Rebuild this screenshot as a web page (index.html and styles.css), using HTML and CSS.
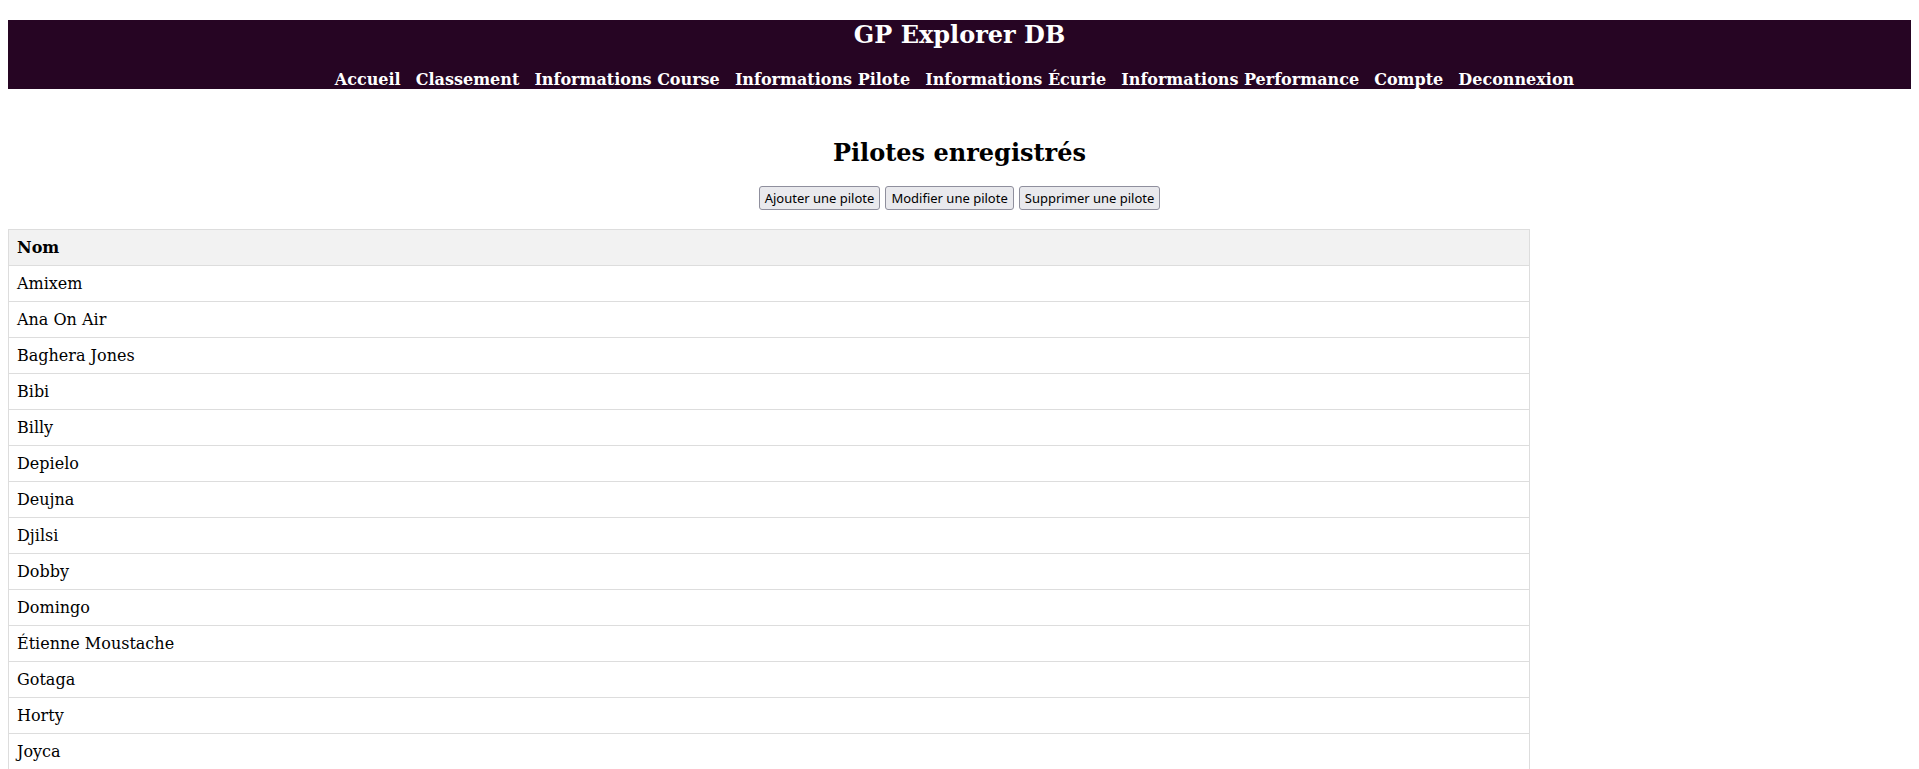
FILE: index.html
```html
<!DOCTYPE html>
<html lang="fr">
<head>
    <meta charset="UTF-8">
    <meta name="viewport" content="width=device-width, initial-scale=1.0">
    <title>Pilotes - GP Explorer DB</title>
    <link rel="stylesheet" href="styles.css">
</head>
<body>

    <!-- En-tête avec le menu -->
    <header class="site-header">
        <h1 class="site-title">GP Explorer DB</h1>
        <nav class="main-nav">
            <a href="#">Accueil</a>
            <a href="#">Classement</a>
            <a href="#">Informations Course</a>
            <a href="#">Informations Pilote</a>
            <a href="#">Informations Écurie</a>
            <a href="#">Informations Performance</a>
            <a href="#">Compte</a>
            <a href="#">Deconnexion</a>
        </nav>
    </header>

    <h2 class="page-title">Pilotes enregistrés</h2>

    <div class="actions">
        <button type="button">Ajouter une pilote</button>
        <button type="button">Modifier une pilote</button>
        <button type="button">Supprimer une pilote</button>
    </div>

    <!-- Liste des pilotes -->
    <table class="pilot-table">
        <thead>
            <tr>
                <th>Nom</th>
            </tr>
        </thead>
        <tbody>
            <tr><td>Amixem</td></tr>
            <tr><td>Ana On Air</td></tr>
            <tr><td>Baghera Jones</td></tr>
            <tr><td>Bibi</td></tr>
            <tr><td>Billy</td></tr>
            <tr><td>Depielo</td></tr>
            <tr><td>Deujna</td></tr>
            <tr><td>Djilsi</td></tr>
            <tr><td>Dobby</td></tr>
            <tr><td>Domingo</td></tr>
            <tr><td>Étienne Moustache</td></tr>
            <tr><td>Gotaga</td></tr>
            <tr><td>Horty</td></tr>
            <tr><td>Joyca</td></tr>
            <tr><td>Kameto</td></tr>
            <tr><td>Maghla</td></tr>
            <tr><td>Michou</td></tr>
            <tr><td>Squeezie</td></tr>
        </tbody>
    </table>

</body>
</html>
```

FILE: styles.css
```css
body {
    font-family: "DejaVu Serif", serif;
    margin: 8px;
}
.site-header {
    margin-top: 12px;
    background-color: #260523;
    color: white;
    text-align: center;
}
.site-title {
    font-size: 24px;
    margin: 0 0 21px;
}
.main-nav a {
    color: white;
    font-weight: bold;
    text-decoration: none;
    margin-right: 10px;
}
.page-title {
    text-align: center;
    font-size: 24px;
    margin: 49px 0 19px;
}
.actions {
    text-align: center;
    margin-bottom: 19px;
}
.actions button {
    font-family: "Noto Sans", sans-serif;
    font-size: 13px;
    padding: 2px 5px;
    border: 1px solid #8f8f9d;
    border-radius: 3px;
    background-color: #e9e9ed;
}
.pilot-table {
    width: 80%;
    border-collapse: collapse;
}
.pilot-table th, .pilot-table td {
    border: 1px solid #ddd;
    padding: 8px;
    text-align: left;
}
.pilot-table th {
    background-color: #f2f2f2;
}
```
